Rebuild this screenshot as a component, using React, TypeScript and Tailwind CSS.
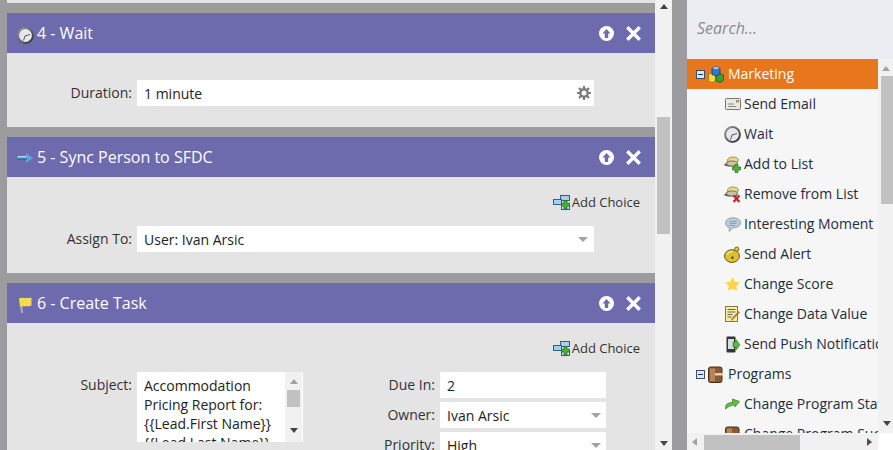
import type { ReactNode } from 'react'

const font = { fontFamily: '"Open Sans", "Liberation Sans", sans-serif' }

function ClockIcon({ id, size = 17 }: { id: string; size?: number }) {
  return (
    <svg width={size} height={size} viewBox="0 0 17 17" aria-hidden="true">
      <defs>
        <linearGradient id={id} x1="0" y1="0" x2="1" y2="1">
          <stop offset="0" stopColor="#9a9a9a" />
          <stop offset="1" stopColor="#2f2f2f" />
        </linearGradient>
      </defs>
      <circle cx="8.500" cy="8.500" r="7.400" fill="#e6e9ec" stroke={`url(#${id})`} strokeWidth="2" />
      <path d="M8 9 13 7.500M8 9 6.500 13.500" stroke="#555" strokeWidth="1" fill="none" />
    </svg>
  )
}

function ArrowIcon() {
  return (
    <svg width="16" height="10" viewBox="0 0 16 10" aria-hidden="true">
      <path d="M0 3h9V0l7 5-7 5V7H0z" fill="#5aa7dc" />
      <path d="M0 5.500h10V7H0z" fill="#2b6ea5" />
      <path d="M1 3.600h8" stroke="#cfe8f7" strokeWidth="1" />
    </svg>
  )
}

function FlagIcon() {
  return (
    <svg width="14" height="16" viewBox="0 0 14 16" aria-hidden="true">
      <path d="M2.500 2 4 16" stroke="#b0b0b0" strokeWidth="2" />
      <path d="M1 1.500C4-.5 7 2 13.500.5V8.500C8.500 10.500 5 8 2 10z" fill="#f2dc4b" />
    </svg>
  )
}

function UpIcon() {
  return (
    <svg width="15" height="15" viewBox="0 0 15 15" aria-hidden="true">
      <circle cx="7.500" cy="7.500" r="7.500" fill="#fff" />
      <path d="M7.500 3 11.500 7.500H9.200V12H5.800V7.500H3.500z" fill="#6e6aae" />
    </svg>
  )
}

function CloseIcon() {
  return (
    <svg width="15" height="15" viewBox="0 0 15 15" aria-hidden="true">
      <path d="M2.500 2.500 12.500 12.500M12.500 2.500 2.500 12.500" stroke="#fff" strokeWidth="3.400" strokeLinecap="square" />
    </svg>
  )
}

function GearIcon() {
  return (
    <svg width="14" height="14" viewBox="0 0 14 14" aria-hidden="true">
      <circle cx="7" cy="7" r="3.700" fill="none" stroke="#7b7b7b" strokeWidth="2.400" />
      <path
        d="M7 0v3M7 11v3M0 7h3M11 7h3M2 2l2 2M10 10l2 2M12 2l-2 2M4 10l-2 2"
        stroke="#7b7b7b"
        strokeWidth="2.200"
      />
    </svg>
  )
}

function AddChoiceIcon() {
  return (
    <svg width="17" height="15" viewBox="0 0 17 15" aria-hidden="true">
      <rect x="7.500" y="0.500" width="9" height="5" fill="#a9cdea" stroke="#2d5f8a" />
      <rect x="0.500" y="4.500" width="8" height="5" fill="#a9cdea" stroke="#2d5f8a" />
      <rect x="8.500" y="9.500" width="8" height="5" fill="#cfe2f1" stroke="#2d5f8a" />
      <path d="M11 5.500h3V8h2.500v3H14v3h-3v-3H8.500V8H11z" fill="#4cae3a" stroke="#23701c" strokeWidth="0.700" />
    </svg>
  )
}

function Caret({ up, color = '#444' }: { up?: boolean; color?: string }) {
  return (
    <svg width="8" height="5" viewBox="0 0 8 5" aria-hidden="true">
      <path d={up ? 'M0 5h8L4 0z' : 'M0 0h8L4 5z'} fill={color} />
    </svg>
  )
}

function SelectCaret() {
  return (
    <svg width="10" height="5" viewBox="0 0 10 5" aria-hidden="true">
      <path d="M0 0h10L5 5z" fill="#a3a3a3" />
    </svg>
  )
}

function Expander() {
  return (
    <span className="flex size-[9px] items-center justify-center border border-[#33506e] bg-[#dce6f2]">
      <span className="h-px w-[5px] bg-[#1f3347]" />
    </span>
  )
}

function MarketingIcon() {
  return (
    <svg width="16" height="17" viewBox="0 0 16 17" aria-hidden="true">
      <path d="M.5 8 4 7l3.500 1.500V15L4 16.500.5 15z" fill="#f4d73f" stroke="#8f7810" strokeWidth="0.800" />
      <path d="M8 9l4-1.500L15.500 9v5.500L12 16.500 8 15z" fill="#3f9e2c" stroke="#1f5f14" strokeWidth="0.800" />
      <path d="M4 2 8 .5 12 2v6.500L8 10 4 8.500z" fill="#2c78cc" stroke="#143f78" strokeWidth="0.800" />
      <path d="M4 2l4 1.500L12 2 8 .5z" fill="#9cc9ef" />
    </svg>
  )
}

function EmailIcon() {
  return (
    <svg width="16" height="12" viewBox="0 0 16 12" aria-hidden="true">
      <rect x="0.500" y="0.500" width="15" height="11" rx="1" fill="#e8e8e6" stroke="#77777a" />
      <path d="M3 6h6M3 8.500h8" stroke="#8a8a8a" />
      <rect x="11" y="2" width="3" height="2.500" fill="#b98a4c" />
    </svg>
  )
}

function ListIcon({ remove }: { remove?: boolean }) {
  return (
    <svg width="17" height="17" viewBox="0 0 17 17" aria-hidden="true">
      <path d="M.5 9 5 4.500h8V10H4z" fill="#77776a" stroke="#44443a" strokeWidth="0.800" />
      <ellipse cx="9" cy="4" rx="5.500" ry="3" fill="#e6d98a" stroke="#8f8340" strokeWidth="0.800" />
      <ellipse cx="8" cy="7.500" rx="5.500" ry="2.500" fill="#c9c5a6" stroke="#66634a" strokeWidth="0.800" />
      {remove ? (
        <path d="M9.500 9.500 15.500 16M15.500 9.500 9.500 16" stroke="#c8252a" strokeWidth="2.200" />
      ) : (
        <path d="M11 8.500h3V11h2.500v3H14v2.500h-3V14H8.500v-3H11z" fill="#55b040" stroke="#26701e" strokeWidth="0.700" />
      )}
    </svg>
  )
}

function BubbleIcon() {
  return (
    <svg width="16" height="15" viewBox="0 0 16 15" aria-hidden="true">
      <path
        d="M8 .8c4 0 7.500 1.800 7.500 5s-3.500 5-7.500 5L4 14.500l.5-3.500C2 10.300.5 8.300.5 5.800.5 2.600 4 .8 8 .8z"
        fill="#b9cbd8"
        stroke="#8199aa"
        strokeWidth="0.800"
      />
      <path d="M4.500 4.500h7M4.500 6.500h7M4.500 8.500h5" stroke="#7d93a3" strokeWidth="0.800" />
    </svg>
  )
}

function BellIcon() {
  return (
    <svg width="17" height="17" viewBox="0 0 16 16" aria-hidden="true">
      <ellipse cx="7.500" cy="9.500" rx="7" ry="6" fill="#dcc030" stroke="#5f4f10" strokeWidth="0.900" />
      <circle cx="12" cy="3" r="2" fill="#e0c74a" stroke="#5f4f10" strokeWidth="0.800" />
      <circle cx="8" cy="11" r="1.100" fill="#4a3c0a" />
      <path d="M3 8c1-2 3-3 5-3" stroke="#f7eca0" strokeWidth="1.200" fill="none" />
    </svg>
  )
}

function StarIcon() {
  return (
    <svg width="15" height="14" viewBox="0 0 15 14" aria-hidden="true">
      <path d="M7.500 0 9.800 4.800 15 5.400 11.200 9l1 5-4.700-2.500L2.800 14l1-5L0 5.400l5.200-.6z" fill="#fcd447" />
    </svg>
  )
}

function NoteIcon() {
  return (
    <svg width="15" height="16" viewBox="0 0 15 16" aria-hidden="true">
      <rect x="0.500" y="0.500" width="12" height="15" fill="#f6eda0" stroke="#7f7a4a" />
      <path d="M2.500 3.500h8M2.500 6h8M2.500 8.500h5M2.500 11h4" stroke="#555" strokeWidth="0.900" />
      <path d="M14.500 6.500 8 13l-1.500 1.500.5-2L13.500 5.500z" fill="#e08a2a" stroke="#7a4712" strokeWidth="0.500" />
    </svg>
  )
}

function PhoneIcon() {
  return (
    <svg width="14" height="17" viewBox="0 0 14 17" aria-hidden="true">
      <rect x="0.500" y="0.500" width="9" height="16" rx="1" fill="#33363a" />
      <rect x="2" y="3" width="6" height="10" fill="#d9dde0" />
      <path d="M7 6h3V3.500L14 9l-4 5v-3H7z" fill="#59b548" stroke="#2c7a22" strokeWidth="0.600" />
    </svg>
  )
}

function ProgramsIcon() {
  return (
    <svg width="15" height="17" viewBox="0 0 15 17" aria-hidden="true">
      <rect x="0.500" y="1" width="13.500" height="15.500" rx="2" fill="#8a5a36" stroke="#4a2c16" />
      <rect x="2" y="2.500" width="5" height="12.500" fill="#b5855c" />
      <rect x="7" y="7" width="8" height="2.500" fill="#e0cdb6" />
    </svg>
  )
}

function GreenArrowIcon() {
  return (
    <svg width="15" height="12" viewBox="0 0 15 12" aria-hidden="true">
      <path
        d="M.5 11 1 7c2-2 4-2.500 6.500-2.500V1l7 2.500L10 9V7C6 7 3.500 8.500.5 11z"
        fill="#66bb44"
        stroke="#2f7d20"
        strokeWidth="0.700"
      />
    </svg>
  )
}

function Label({ children, className = '' }: { children: ReactNode; className?: string }) {
  return <span className={`w-[130px] shrink-0 pr-[5px] text-right text-[14px] text-[#333] ${className}`}>{children}</span>
}

function Field({ children, right, className }: { children: ReactNode; right?: ReactNode; className: string }) {
  return (
    <div className={`flex h-[26px] items-center justify-between bg-white pl-[7px] text-[14px] text-[#222] ${className}`}>
      <span>{children}</span>
      {right}
    </div>
  )
}

function Card({ icon, title, children }: { icon: ReactNode; title: string; children: ReactNode }) {
  return (
    <section>
      <header className="flex h-[40px] items-center bg-[#6e6aae] pr-[14px] pl-[10px] text-white">
        <span className="flex w-[20px] shrink-0 items-center">{icon}</span>
        <h2 className="flex-1 text-[16px] leading-none font-normal">{title}</h2>
        <span className="flex items-center gap-[12px]">
          <UpIcon />
          <CloseIcon />
        </span>
      </header>
      <div className="bg-[#e4e4e4]">{children}</div>
    </section>
  )
}

function AddChoice() {
  return (
    <div className="flex items-center justify-end gap-[2px] pr-[15px] text-[13px] leading-none text-[#333]">
      <AddChoiceIcon />
      <span>Add Choice</span>
    </div>
  )
}

const treeItems: { icon: ReactNode; label: string }[] = [
  { icon: <EmailIcon />, label: 'Send Email' },
  { icon: <ClockIcon id="tree-clock" />, label: 'Wait' },
  { icon: <ListIcon />, label: 'Add to List' },
  { icon: <ListIcon remove />, label: 'Remove from List' },
  { icon: <BubbleIcon />, label: 'Interesting Moment' },
  { icon: <BellIcon />, label: 'Send Alert' },
  { icon: <StarIcon />, label: 'Change Score' },
  { icon: <NoteIcon />, label: 'Change Data Value' },
  { icon: <PhoneIcon />, label: 'Send Push Notification' },
]

function TreeItem({ icon, label }: { icon: ReactNode; label: string }) {
  return (
    <div className="flex h-[30px] items-center pl-[36px] whitespace-nowrap text-[14px] text-[#222d3c]">
      <span className="flex w-[21px] shrink-0 items-center justify-center pr-[2px]">{icon}</span>
      <span className="pb-[2px]">{label}</span>
    </div>
  )
}

export default function App() {
  return (
    <div className="flex h-[450px] w-[893px] overflow-hidden bg-[#9c9b9e]" style={font}>
      <main className="flex w-[655px] shrink-0 flex-col gap-[10px] pl-[7px]">
        <div className="h-[3px] bg-[#e4e4e4]" />

        <Card icon={<span className="mt-[4px] flex"><ClockIcon id="head-clock" /></span>} title="4 - Wait">
          <div className="flex h-[74px] items-center pt-[1px] pb-0">
            <div className="mt-[5px] flex items-center">
              <Label className="pb-[2px]">Duration:</Label>
              <Field className="w-[457px] pr-[3px]" right={<GearIcon />}>
                1 minute
              </Field>
            </div>
          </div>
        </Card>

        <Card icon={<span className="mt-[2px] flex"><ArrowIcon /></span>} title="5 - Sync Person to SFDC">
          <div className="flex h-[96px] flex-col pt-[18px]">
            <AddChoice />
            <div className="mt-[16px] flex items-center">
              <Label className="pb-[2px]">Assign To:</Label>
              <Field className="w-[457px] pr-[6px]" right={<SelectCaret />}>
                User: Ivan Arsic
              </Field>
            </div>
          </div>
        </Card>

        <Card icon={<span className="mt-[4px] ml-px flex"><FlagIcon /></span>} title="6 - Create Task">
          <div className="flex h-[127px] flex-col pt-[18px]">
            <AddChoice />
            <div className="mt-[16px] flex">
              <Label className="pt-[2px]">Subject:</Label>
              <div className="flex h-[70px] w-[166px] shrink-0 overflow-hidden bg-white">
                <p className="w-[148px] shrink-0 pt-[4px] pl-[7px] text-[14px] leading-[19px] text-[#222]">
                  Accommodation Pricing Report for: {'{{Lead.First Name}}'} {'{{Lead.Last Name}}'}
                </p>
                <div className="flex w-[17px] shrink-0 flex-col items-center bg-[#f1f1f1] pt-[7px]">
                  <Caret up color="#a3a3a3" />
                  <div className="mt-[6px] h-[17px] w-[13px] bg-[#c1c1c1]" />
                  <div className="mt-[21px]">
                    <Caret />
                  </div>
                </div>
              </div>
              <div className="ml-[7px] flex flex-col gap-[4px]">
                <div className="flex items-center">
                  <Label className="pb-[1px]">Due In:</Label>
                  <Field className="w-[166px]">2</Field>
                </div>
                <div className="flex items-center">
                  <Label className="pb-[1px]">Owner:</Label>
                  <Field className="w-[166px] pr-[5px]" right={<SelectCaret />}>
                    Ivan Arsic
                  </Field>
                </div>
                <div className="flex items-center">
                  <Label className="pb-[1px]">Priority:</Label>
                  <Field className="w-[166px] pr-[5px]" right={<SelectCaret />}>
                    High
                  </Field>
                </div>
              </div>
            </div>
          </div>
        </Card>
      </main>

      <div className="flex h-full w-[17px] shrink-0 flex-col items-center bg-[#f1f1f1]">
        <div className="mt-[4px] flex h-[4px] items-center">
          <Caret up />
        </div>
        <div className="mt-[109px] h-[117px] w-[13px] bg-[#c1c1c1]" />
        <div className="mt-[207px]">
          <Caret />
        </div>
      </div>

      <div className="w-[15px] shrink-0" />

      <aside className="flex h-full w-[206px] shrink-0 flex-col bg-[#f6f6f6]">
        <div className="flex h-[59px] shrink-0 items-center bg-[#ecedf3] pb-[4px] pl-[10px] text-[16px] text-[#8b8b8b] italic">
          Search...
        </div>
        <div className="flex min-h-0 flex-1">
          <div className="w-[191px] shrink-0 overflow-hidden">
            <div className="flex h-[30px] items-center bg-[#e8761c] pl-[9px] text-[14px] text-white">
              <span className="flex w-[12px] shrink-0">
                <Expander />
              </span>
              <span className="flex w-[20px] shrink-0">
                <MarketingIcon />
              </span>
              <span className="pb-[2px]">Marketing</span>
            </div>
            {treeItems.map((item) => (
              <TreeItem key={item.label} icon={item.icon} label={item.label} />
            ))}
            <div className="flex h-[30px] items-center pl-[9px] text-[14px] text-[#222d3c]">
              <span className="flex w-[12px] shrink-0">
                <Expander />
              </span>
              <span className="flex w-[20px] shrink-0">
                <ProgramsIcon />
              </span>
              <span className="pb-[2px]">Programs</span>
            </div>
            <TreeItem icon={<GreenArrowIcon />} label="Change Program Status" />
            <TreeItem icon={<ProgramsIcon />} label="Change Program Success" />
          </div>
          <div className="flex w-[15px] shrink-0 flex-col items-center bg-[#f1f1f1]">
            <div className="mt-[7px] flex h-[4px] items-center">
              <Caret up color="#a3a3a3" />
            </div>
            <div className="mt-[6px] ml-[3px] h-[128px] w-[13px] bg-[#c1c1c1]" />
            <div className="mt-[217px] ml-[3px]">
              <Caret />
            </div>
          </div>
        </div>
        <div className="flex h-[17px] shrink-0 bg-white">
          <div className="flex w-[191px] items-center bg-[#f1f1f1] pl-[5px]">
            <svg width="5" height="8" viewBox="0 0 5 8" aria-hidden="true">
              <path d="M5 0v8L0 4z" fill="#a3a3a3" />
            </svg>
            <div className="mt-[2px] ml-[7px] h-[15px] w-[96px] bg-[#c1c1c1]" />
            <svg className="ml-[67px]" width="5" height="8" viewBox="0 0 5 8" aria-hidden="true">
              <path d="M0 0v8l5-4z" fill="#505050" />
            </svg>
          </div>
        </div>
      </aside>
    </div>
  )
}
